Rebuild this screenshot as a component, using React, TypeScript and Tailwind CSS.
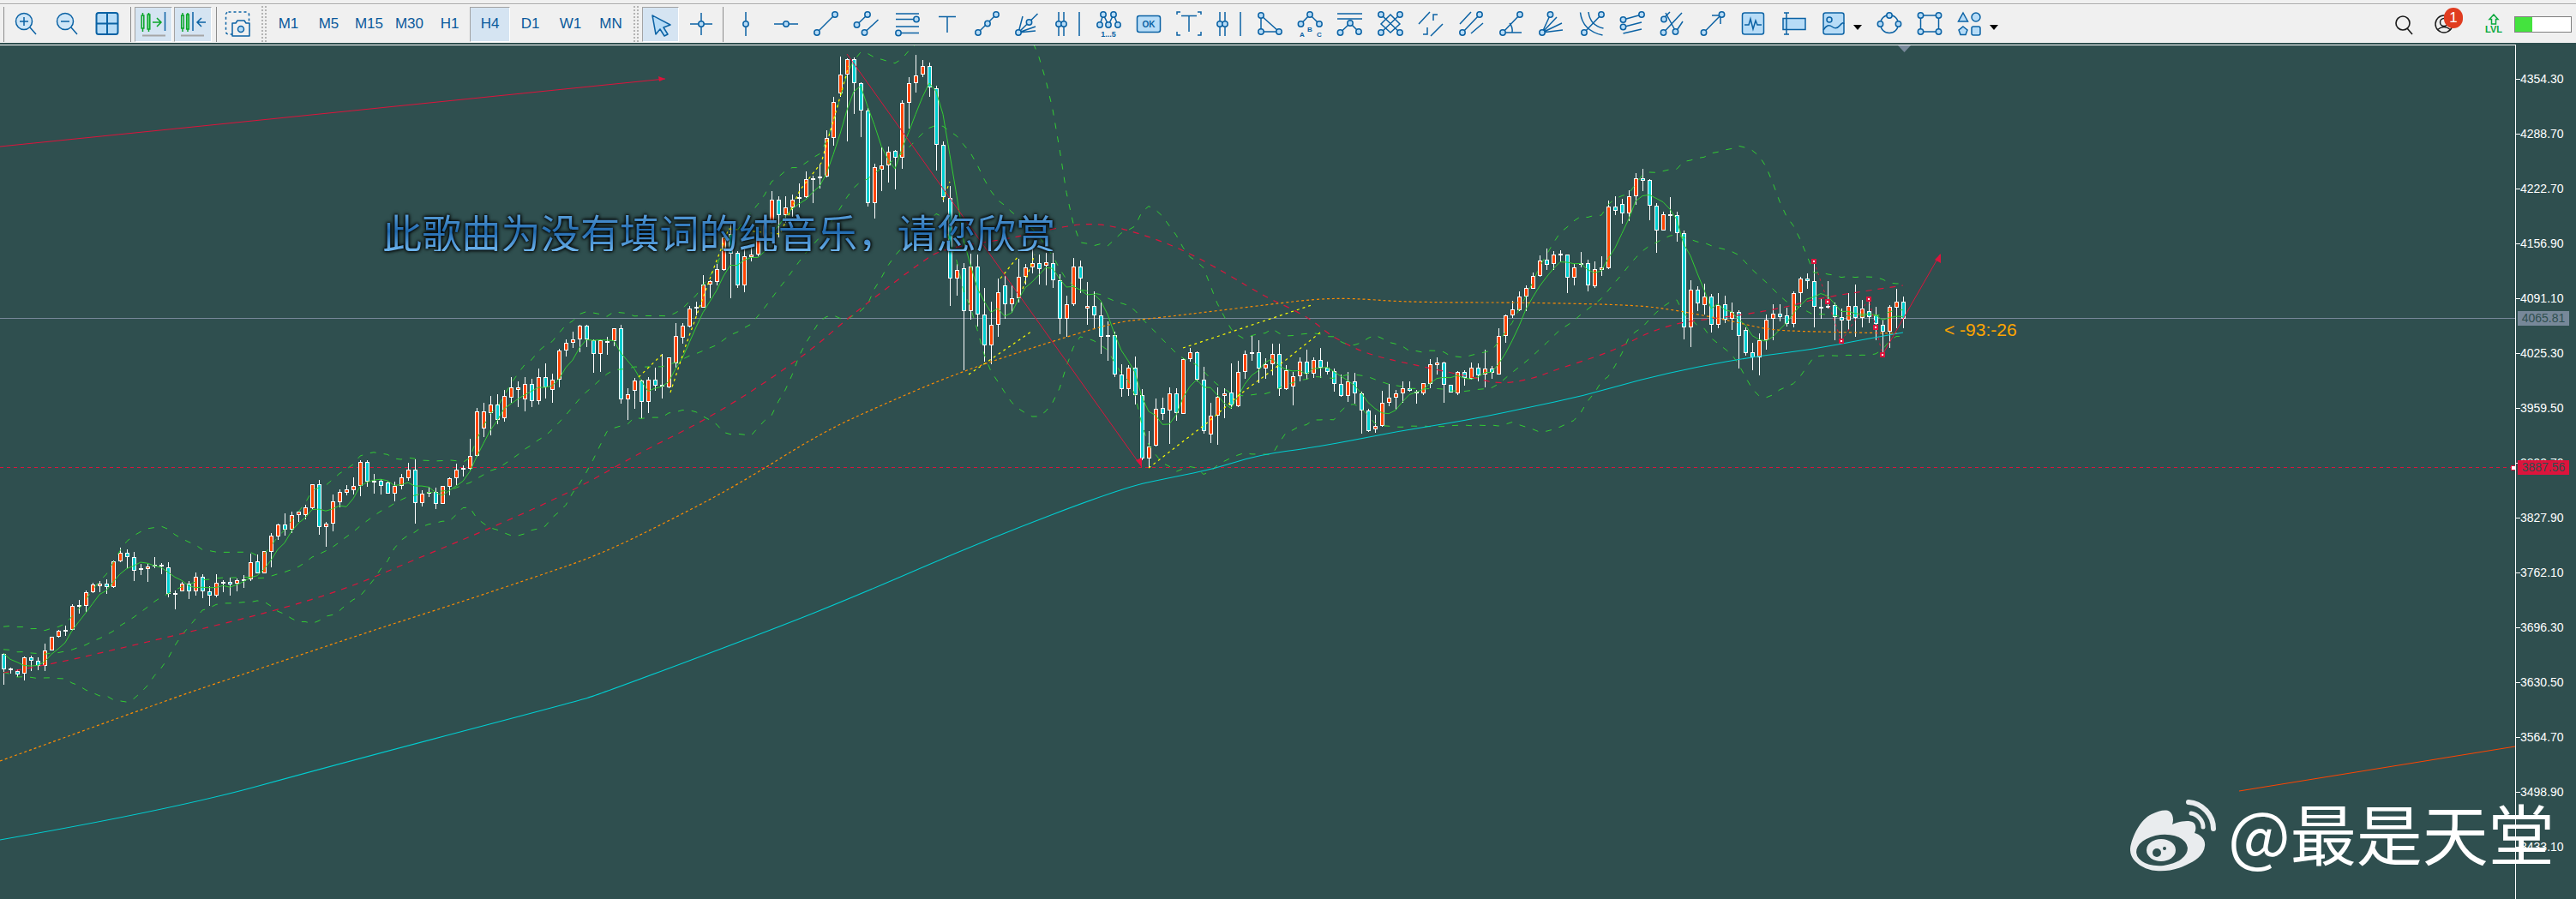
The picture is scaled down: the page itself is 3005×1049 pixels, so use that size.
import type { ReactNode } from "react";

type Row = [number, number, number, number, number];

// [teal, bodyTop, bodyBottom, wickTop, wickBottom], read off the crops
const seg1: Row[] = [
  [1,790,842,785,897],[0,840,846,838,858],[1,848,860,843,870],[0,802,858,798,882],[1,802,812,795,848],
  [1,812,832,800,845],[0,776,832,754,848],[0,728,776,728,776],[0,708,728,706,732],[0,705,710,690,725],
  [0,622,706,615,708],[0,618,623,600,648],[0,574,620,568,645],[0,547,574,540,575],[0,544,551,535,572],
  [1,544,554,528,578],[0,466,554,462,558],[0,436,466,418,468],[1,436,451,424,490],[1,451,497,433,533],
  [0,490,493,475,513],[0,484,493,475,537],[0,478,484,450,488],[1,478,484,472,510],[1,485,578,468,590],
  [0,577,581,567,632],[0,542,569,538,570],[1,542,571,534,597],[0,518,571,504,585],[1,518,571,510,594],
  [1,571,584,552,620],[0,539,584,510,590],[0,538,542,532,572],[1,538,545,522,585],[0,530,544,525,570],
  [0,528,530,513,558],[0,467,529,438,533],[1,466,506,440,508],[0,430,506,428,508],[0,376,431,365,485],
  [0,337,377,334,390],[1,337,353,297,375],[0,302,353,292,365],[0,292,302,290,328],[0,277,302,268,318],
  [0,196,278,195,282],[1,196,344,180,372],[0,334,344,328,413],[0,256,334,232,360],[0,221,257,212,275],
  [0,214,224,198,234],[0,202,216,172,232],[0,118,202,110,236],[1,118,186,111,205],[0,182,186,158,228],
  [1,184,200,178,232],[1,190,227,185,228],[0,202,227,186,255],[0,172,202,158,212],[0,145,173,120,182],
  [1,145,260,108,333],[0,227,260,216,272],[0,221,224,205,240],[1,222,263,208,282],[0,202,263,200,263],
  [0,175,203,172,234],[0,145,175,123,198],[0,137,145,128,168],[0,97,140,37,145],[0,-60,97,-72,100],
];
// these eleven sit in a gap between the crops, rough values in px from 0
const seg2: Row[] = [
  [0,480,500,470,510],[0,472,482,462,508],[1,472,490,460,495],[0,462,488,455,492],[0,452,464,440,470],
  [0,452,455,445,475],[0,448,466,440,480],[1,448,468,442,475],[0,440,468,430,472],[1,440,452,424,465],
  [0,443,455,436,470],
];
const seg3: Row[] = [
  [0,778,880,770,905],[0,750,778,738,797],[0,739,751,712,768],[0,691,739,686,782],[1,691,737,687,765],
  [1,740,790,738,855],[0,742,790,737,852],[0,743,746,728,792],[0,700,745,700,762],[1,700,949,687,962],
  [0,929,947,910,1020],[0,883,917,874,980],[1,883,956,878,1013],[0,880,956,870,995],[1,880,899,837,918],
  [0,898,904,790,945],[0,802,905,800,910],[0,727,823,682,838],[0,691,731,682,753],[0,631,692,622,695],
  [0,625,631,606,655],[0,547,626,513,628],[0,535,547,530,595],[0,493,536,475,548],[0,380,495,375,498],
  [1,368,437,330,593],[1,436,548,428,558],[0,448,548,412,572],[0,442,450,407,465],[0,382,441,362,448],
  [0,330,382,310,385],[0,250,330,220,332],[1,250,302,238,380],[0,275,302,238,330],[0,250,276,232,310],
  [0,241,245,192,276],[0,176,241,150,243],[0,174,177,165,262],
];
const seg4: Row[] = [
  [0,498,505,455,540],[0,362,498,335,500],[0,236,362,220,390],[0,142,208,78,218],[0,88,142,85,375],
  [1,88,172,82,278],[1,172,268,168,360],[1,268,590,258,602],[0,466,590,452,645],[0,458,474,396,548],
  [0,410,458,394,520],[1,408,433,405,542],[0,241,433,232,470],[0,172,241,150,330],[0,145,172,72,203],
  [0,110,140,90,150],[1,110,186,100,218],[1,190,388,180,477],[1,388,570,375,587],[1,572,856,530,950],
  [0,824,856,805,915],[1,820,968,800,1175],[0,812,968,768,1000],[1,812,982,770,1022],[1,982,1088,888,1145],
  [0,1016,1088,935,1155],[0,902,1016,855,1058],[1,880,946,845,995],[0,925,946,880,975],[0,848,925,785,940],
  [0,815,848,805,875],[0,800,816,748,836],[1,800,822,770,876],[0,799,810,765,880],[1,800,862,765,888],
  [1,862,996,840,1050],[0,946,996,915,1060],[0,812,946,782,950],[1,812,855,793,905],[0,950,960,868,1018],
  [1,950,985,900,1030],[1,985,1060,938,1120],[0,1054,1060,1005,1142],[1,1052,1190,1040,1200],
];
const seg5: Row[] = [
  [1,290,342,255,368],[0,268,343,258,365],[1,268,364,228,395],[1,362,586,342,590],[0,542,586,490,615],
  [0,410,541,375,542],[1,409,428,372,450],[0,358,418,335,533],[1,358,427,340,452],[0,238,428,235,430],
  [0,214,238,197,245],[1,214,308,210,316],[1,308,490,265,497],[0,434,502,390,530],[0,368,434,335,537],
  [0,356,367,340,445],[1,355,400,252,410],[0,283,402,243,405],[0,218,283,208,305],[0,214,219,152,243],
  [1,214,271,170,320],[0,256,271,235,305],[0,220,256,182,295],[1,220,343,184,367],[0,277,343,258,345],
  [0,298,334,283,398],[0,247,298,230,315],[1,247,288,205,310],[0,241,288,230,302],[1,241,268,198,302],
  [1,266,283,245,290],[1,280,325,270,350],[1,325,367,290,368],[0,314,367,283,388],[1,314,358,285,392],
  [1,358,418,350,497],[1,418,488,410,492],[0,472,482,432,495],[0,391,472,348,475],[0,371,391,325,402],
  [0,358,371,345,415],[0,340,358,315,390],[1,340,347,315,352],[0,350,355,345,392],[0,322,356,320,362],
  [0,256,323,237,338],[0,250,257,230,290],[1,250,328,245,390],[1,328,355,328,355],[0,283,358,280,362],
  [1,283,302,277,330],[0,268,306,248,310],[1,268,293,252,315],[0,271,292,204,335],[1,271,284,262,305],
  [0,157,290,128,292],[0,85,157,80,180],[0,64,85,33,92],[0,18,65,0,68],
];
const seg6: Row[] = [
  [0,468,498,460,550],[0,427,470,415,470],[0,371,427,355,430],[1,370,386,330,405],[0,352,385,340,405],
  [0,348,353,337,378],[1,350,433,350,487],[0,397,433,385,458],[0,382,387,342,397],[1,382,460,370,480],
  [0,403,461,375,467],[0,397,404,357,425],[0,184,398,162,403],[1,184,197,148,212],[1,175,206,155,242],
  [0,148,206,126,235],[0,85,148,66,177],[1,85,92,52,128],[1,91,179,88,232],[1,179,268,172,345],
  [0,211,266,200,266],[0,211,215,150,270],[1,214,275,202,305],[1,275,605,268,648],[0,475,605,441,675],
  [1,475,521,463,550],[0,499,527,453,562],[1,499,598,490,624],[0,527,598,487,608],[1,526,578,495,590],
  [0,553,577,520,615],[1,553,635,545,750],[1,616,695,605,706],[1,694,712,660,755],[0,650,712,628,773],
  [0,578,650,562,683],[0,559,577,525,650],[1,559,569,525,585],[1,565,595,538,602],[0,487,595,480,605],
  [0,436,487,428,535],[1,436,445,418,472],[1,445,535,375,605],[0,535,539,505,575],[0,530,533,445,540],
  [1,529,571,518,650],[1,571,581,540,655],[0,532,581,485,615],[1,532,574,455,640],[0,541,574,510,605],
  [1,550,569,505,590],[1,565,595,535,650],[1,596,620,580,700],[0,535,620,528,678],[0,517,536,470,610],
  [1,517,575,498,608],
];

const toPx = (rows: Row[], origin: number, div: number): Row[] =>
  rows.map(([t, a, b, c, d]) => [t, origin + a / div, origin + b / div, origin + c / div, origin + d / div]);

const candles: Row[] = [
  ...toPx(seg1, 500, 3),
  ...toPx(seg2, 0, 1),
  ...toPx(seg3, 150, 3),
  ...toPx(seg4, 40, 3),
  ...toPx(seg5, 340, 3),
  ...toPx(seg6, 180, 3),
];

const cx = (i: number) => 4 + 8 * i;
const closes = candles.map((c) => (c[0] ? c[2] : c[1]));
const history = [742, 768, 740, 770, 744, 766, 742, 770, 745, 768, 742, 766, 744, 770, 742, 768, 745, 770, 748, 768];
const all = [...history, ...closes];

const stats = (i: number, period: number) => {
  const w = all.slice(i + history.length - period + 1, i + history.length + 1);
  const mean = w.reduce((s, v) => s + v, 0) / w.length;
  const sd = Math.sqrt(w.reduce((s, v) => s + (v - mean) * (v - mean), 0) / w.length);
  return { mean, sd };
};

const toPoints = (p: number[][]) => p.map(([x, y]) => `${x},${y}`).join(" ");
const smooth = (p: number[][]) => {
  let d = `M${p[0][0]} ${p[0][1]}`;
  for (let i = 1; i < p.length - 1; i++) {
    const mx = (p[i][0] + p[i + 1][0]) / 2;
    const my = (p[i][1] + p[i + 1][1]) / 2;
    d += `Q${p[i][0]} ${p[i][1]} ${mx} ${my}`;
  }
  const last = p[p.length - 1];
  return `${d}L${last[0]} ${last[1]}`;
};
const fast = toPoints(closes.map((_, i) => [cx(i), stats(i, 5).mean]));
const bandMid = toPoints(closes.map((_, i) => [cx(i), stats(i, 20).mean]));
const bandUp = toPoints(closes.map((_, i) => [cx(i), stats(i, 20).mean - 2 * stats(i, 20).sd]));
const bandLow = toPoints(closes.map((_, i) => [cx(i), stats(i, 20).mean + 2 * stats(i, 20).sd]));

const tealLine = [[0,980],[200,945],[400,890],[670,819],[700,810],[900,735],[1000,695],[1150,630],[1310,569],[1367,557],[1417,547],[1467,531],[1533,522],[1587,512],[1633,503],[1683,495],[1733,486],[1780,476],[1847,462],[1913,443],[1980,428],[2047,416],[2113,408],[2180,395],[2220,388]];
const orangeLine = [[0,888],[192,818],[268,792],[357,762],[446,732],[536,703],[625,673],[700,647],[780,608],[862,565],[958,505],[1030,472],[1110,438],[1200,407],[1300,376],[1340,372],[1400,365],[1483,355],[1533,349],[1577,348],[1633,352],[1700,353],[1780,353],[1913,356],[1960,363],[2013,373],[2063,385],[2113,387],[2213,389]];
const crimsonLine = [[4,785],[60,775],[134,758],[210,740],[312,715],[402,688],[491,650],[580,613],[670,572],[747,528],[817,493],[883,453],[947,408],[987,373],[1027,342],[1073,307],[1100,290],[1180,278],[1227,267],[1277,259],[1333,273],[1393,297],[1477,347],[1500,357],[1530,373],[1550,390],[1577,405],[1600,414],[1623,420],[1647,425],[1693,435],[1717,440],[1743,447],[1767,446],[1793,440],[1813,432],[1863,416],[1890,405],[1923,388],[1957,377],[1987,373],[2013,370],[2060,363],[2097,355],[2113,350],[2147,344],[2180,339],[2220,333]];
const yellowLines = [
  [[782,458],[800,403],[813,367],[830,320],[850,267],[910,273],[933,222],[958,190],[980,113],[990,77]],
  [[745,440],[772,414]],
  [[1100,233],[1108,212]],
  [[1130,437],[1203,387]],
  [[1167,325],[1187,300]],
  [[1193,337],[1207,297]],
  [[1340,546],[1410,492],[1443,463],[1460,450],[1500,420],[1540,388]],
  [[1380,406],[1530,356]],
];
const markers = [[2116,305],[2132,352],[2148,398],[2180,349],[2188,382],[2196,414]];
const priceLabels = ["4354.30","4288.70","4222.70","4156.90","4091.10","4025.30","3959.50","3893.70","3827.90","3762.10","3696.30","3630.50","3564.70","3498.90","3433.10"];
const timeframes = ["M1","M5","M15","M30","H1","H4","D1","W1","MN"];

const BLUE = "#0b62a4";
const LIGHT = "#b7dcf7";

function Dot({ x, y }: { x: number; y: number }) {
  return <circle cx={x} cy={y} r={3.2} fill={LIGHT} stroke={BLUE} strokeWidth={1.5} />;
}

function Icon({ children }: { children: ReactNode }) {
  return (
    <svg width="32" height="32" viewBox="0 0 32 32" fill="none" stroke={BLUE} strokeWidth="1.5">
      {children}
    </svg>
  );
}

function Label({ x, y, size, children }: { x: number; y: number; size: number; children: string }) {
  return (
    <text x={x} y={y} fontSize={size} fontWeight="700" fill={BLUE} stroke="none" textAnchor="middle" fontFamily="Liberation Sans, sans-serif">
      {children}
    </text>
  );
}

const bars = (
  <>
    <path d="M5 2V30M11 2V30M29 2V30" />
    <Dot x={5} y={16} />
    <Dot x={11} y={16} />
  </>
);

const drawIcons: ReactNode[] = [
  <><path d="M16 2V30" /><Dot x={16} y={16} /></>,
  <><path d="M2 16H30" /><Dot x={16} y={16} /></>,
  <><path d="M5 26L26 5" /><Dot x={5} y={26} /><Dot x={26} y={5} /></>,
  <><path d="M4.5 17L17 5M13.5 26L29.5 11" /><Dot x={4.5} y={17} /><Dot x={17} y={5} /><Dot x={13.5} y={26} /></>,
  <><path d="M3 4H30M3 10.5H24M3 19H30M9 26.5H30" /><Dot x={27} y={10.5} /><Dot x={6} y={26.5} /></>,
  <path d="M6 7.5H26M16 7.5V26" />,
  <><path d="M5 26L26 5" /><Dot x={5} y={26} /><Dot x={16} y={15.5} /><Dot x={26} y={5} /></>,
  <><path d="M5 26L10 7M5 26L27.5 4M5 26L25 19M5 26L25 24" /><Dot x={5} y={26} /><Dot x={17.5} y={14} /></>,
  bars,
  <>
    <path d="M6 17L10 5L16 17L22 5L27 17" />
    <Dot x={10} y={5} /><Dot x={22} y={5} /><Dot x={6} y={17} /><Dot x={16} y={17} /><Dot x={27} y={17} />
    <Label x={16} y={31} size={9}>1...5</Label>
  </>,
  <>
    <rect x="2.5" y="6.5" width="27" height="19" rx="2.5" fill={LIGHT} />
    <Label x={16} y={20} size={10}>OK</Label>
  </>,
  <path d="M7 6.5H25M16 6.5V25M6 2H2V5M26 2H30V5M2 25V29H6M30 25V29H26" />,
  bars,
  <><path d="M6 6L6 25H27L6 6" /><Dot x={6} y={6} /><Dot x={6} y={25} /><Dot x={27} y={25} /></>,
  <>
    <path d="M5.5 16L16 5L27 16" />
    <Dot x={16} y={5} /><Dot x={5.5} y={16} /><Dot x={27} y={16} />
    <Label x={7} y={31} size={8}>A</Label><Label x={16} y={25} size={8}>B</Label><Label x={27} y={31} size={8}>C</Label>
  </>,
  <>
    <path d="M1 4H30M1 10H30M16 15L4.5 26M16 15L26 25" />
    <Dot x={16} y={15} /><Dot x={4.5} y={26} /><Dot x={26} y={25} />
  </>,
  <>
    <path d="M5 5L27 26M27 5L5 26M16 5L27 16L16 26L5 16Z" />
    <Dot x={5} y={5} /><Dot x={27} y={5} /><Dot x={5} y={26} /><Dot x={27} y={26} />
  </>,
  <path d="M2 16L15 2M30 16L16 30M19 12V5H24M12 20V28H7" />,
  <><path d="M3 16L16 2M6 26L26 5M16 27L30 15" /><Dot x={26} y={5} /><Dot x={6} y={26} /></>,
  <><path d="M6 26L26 5M6 26H28M14 15Q18 20 17 26" /><Dot x={6} y={26} /><Dot x={26} y={5} /></>,
  <><path d="M5 26L14.5 5M5 26L22 8M5 26L28 15M5 26L29 23" /><Dot x={14.5} y={5} /><Dot x={5} y={26} /></>,
  <><path d="M7 26L27 5M2.5 2.5Q5 24 28.5 29M12 2Q14 18 29.5 21" /><Dot x={7} y={26} /><Dot x={27} y={5} /></>,
  <>
    <path d="M5.5 11L27 5M5.5 19.5L27 14M5.5 27L27 22" />
    <Dot x={5.5} y={11} /><Dot x={27} y={5} /><Dot x={5.5} y={19.5} />
  </>,
  <>
    <path d="M5.5 26L27 3M8 3L20 25M4 11L13 2M20 25L28 13" />
    <Dot x={5.5} y={26} /><Dot x={19.5} y={25} /><Dot x={6} y={10.5} />
  </>,
  <><path d="M5.5 26L26 5M15 6H25V16" /><Dot x={5.5} y={26} /><Dot x={26.5} y={5} /></>,
  <>
    <rect x="3.5" y="3" width="25" height="25" rx="2.5" fill={LIGHT} />
    <path d="M6 17H11L13 10L16 22L19 12L21 17H26" />
  </>,
  <>
    <rect x="4" y="9.5" width="26" height="13" fill={LIGHT} />
    <path d="M8 3V28M5 3H11M5 28H11" />
  </>,
  <>
    <rect x="4" y="3" width="24" height="25" rx="2.5" fill={LIGHT} />
    <circle cx="11" cy="11" r="3" />
    <path d="M4 23Q9 15 14 19T23 18T28 16" />
  </>,
];

const shapeIcons: ReactNode[] = [
  <>
    <circle cx="16" cy="16" r="10.5" />
    <Dot x={16} y={6} /><Dot x={5.5} y={16} /><Dot x={26.5} y={16} />
  </>,
  <>
    <rect x="5.5" y="6" width="21" height="19" />
    <Dot x={5.5} y={6} /><Dot x={26.5} y={6} /><Dot x={5.5} y={25} /><Dot x={26.5} y={25} />
  </>,
  <>
    <path d="M8 3L13.5 13H2.5Z" fill={LIGHT} />
    <circle cx="23" cy="8" r="5" fill={LIGHT} />
    <path d="M8 19L13 23L11 28.5H5L3 23Z" fill={LIGHT} />
    <rect x="18" y="19" width="10" height="10" rx="2" fill={LIGHT} />
  </>,
];

function Cell({ children }: { children: ReactNode }) {
  return <div className="flex h-full w-[47px] shrink-0 items-center justify-center">{children}</div>;
}

function Sep({ className }: { className: string }) {
  return <div className={`h-[41px] w-px shrink-0 bg-[#8c8c8c] ${className}`} />;
}

function Grip({ className }: { className: string }) {
  return <div className={`h-[42px] w-[6px] shrink-0 border-x-2 border-dotted border-[#b4b4b4] ${className}`} />;
}

function DropArrow() {
  return <div className="mt-[7px] h-0 w-0 shrink-0 border-x-[5px] border-t-[6px] border-x-transparent border-t-black" />;
}

const pressed = "border border-t-[#a3a3a3] border-l-[#a3a3a3] border-r-white border-b-white bg-[#d5e4f2]";

function Toolbar() {
  return (
    <div className="flex h-[44px] items-center bg-[#f0f0f0] pl-[4px] font-['Liberation_Sans',sans-serif]">
      <Sep className="" />
      {[
        <>
          <circle cx="15" cy="13" r="9.5" fill="#cfe6f7" />
          <path d="M22 20L29 28M10 13H20M15 8V18" />
        </>,
        <>
          <circle cx="15" cy="13" r="9.5" fill="#cfe6f7" />
          <path d="M22 20L29 28M10 13H20" />
        </>,
        <>
          <rect x="3.5" y="3" width="25" height="25" rx="2.5" fill={LIGHT} strokeWidth="2" />
          <path d="M16 3V28M3.5 15.5H28.5" strokeWidth="2" />
        </>,
      ].map((icon, i) => (
        <div key={i} className="flex h-full w-[48px] shrink-0 items-center justify-center">
          <Icon>{icon}</Icon>
        </div>
      ))}
      <Sep className="ml-[3px]" />
      <div className={`ml-[4px] flex h-[41px] w-[44px] shrink-0 items-center justify-center ${pressed}`}>
        <Icon>
          <path d="M3.5 3V25M10.5 3V25" stroke="#0aa52a" />
          <rect x="2.2" y="6" width="2.6" height="15" fill="#d5e4f2" stroke="#0aa52a" />
          <rect x="9.2" y="5" width="2.6" height="17" fill="#7be08c" stroke="#0aa52a" />
          <path d="M15 14H24M20 9L25 14L20 19" stroke="#0aa52a" />
          <path d="M29.5 2V24" />
          <path d="M3 29.5H30" stroke="#a6a6a6" strokeWidth="2" />
        </Icon>
      </div>
      <div className={`ml-[2px] flex h-[41px] w-[44px] shrink-0 items-center justify-center ${pressed}`}>
        <Icon>
          <path d="M4 3V25M10 3V25" stroke="#0aa52a" />
          <rect x="2.7" y="6" width="2.6" height="15" fill="#d5e4f2" stroke="#0aa52a" />
          <rect x="8.7" y="5" width="2.6" height="17" fill="#7be08c" stroke="#0aa52a" />
          <path d="M16 2V24" />
          <path d="M31 14H22M26 9L21 14L26 19" />
          <path d="M2 29.5H29" stroke="#a6a6a6" strokeWidth="2" />
        </Icon>
      </div>
      <Sep className="ml-[5px]" />
      <div className="flex h-full w-[50px] shrink-0 items-center justify-center">
        <Icon>
          <rect x="1.5" y="2" width="27" height="26" rx="3" strokeDasharray="3 3" />
          <path d="M9 15H13L15 12H23L25 15H29V30H9Z" fill="#f0f0f0" strokeLinejoin="round" />
          <circle cx="19" cy="22" r="3.5" fill={LIGHT} />
        </Icon>
      </div>
      <Grip className="ml-[2px]" />
      <div className="ml-[2px] flex h-full shrink-0 items-center">
        {timeframes.map((t) => (
          <div
            key={t}
            className={
              t === "H4"
                ? `flex h-[41px] w-[47px] items-center justify-center text-[17px] text-[#0a5a9c] ${pressed}`
                : "flex h-[41px] w-[47px] items-center justify-center text-[17px] text-[#0a5a9c]"
            }
          >
            {t}
          </div>
        ))}
      </div>
      <Grip className="ml-[3px]" />
      <div className={`ml-[4px] flex h-[41px] w-[43px] shrink-0 items-center justify-center ${pressed}`}>
        <Icon>
          <path d="M6 6L27 17L19 20L24 28L20 30L15 22L10 28Z" fill={LIGHT} strokeLinejoin="round" />
        </Icon>
      </div>
      <div className="ml-[2px] flex h-full w-[47px] shrink-0 items-center justify-center">
        <Icon>
          <path d="M3 16H29M16 3V29" />
          <Dot x={16} y={16} />
        </Icon>
      </div>
      <Sep className="ml-[2px]" />
      <div className="ml-[2px] flex h-full shrink-0 items-center">
        {drawIcons.map((icon, i) => (
          <Cell key={i}>
            <Icon>{icon}</Icon>
          </Cell>
        ))}
      </div>
      <DropArrow />
      <div className="ml-[8px] flex h-full shrink-0 items-center">
        {shapeIcons.map((icon, i) => (
          <Cell key={i}>
            <Icon>{icon}</Icon>
          </Cell>
        ))}
      </div>
      <DropArrow />
      <div className="ml-auto flex items-center pr-[5px]">
        <svg width="24" height="24" viewBox="0 0 24 24" fill="none" stroke="#1a1a1a" strokeWidth="1.6" className="mt-[2px]">
          <circle cx="11" cy="10" r="8" />
          <path d="M16 16L22 23" />
        </svg>
        <div className="relative ml-[23px] h-[24px] w-[24px]">
          <svg width="24" height="24" viewBox="0 0 24 24" fill="none" stroke="#1a1a1a" strokeWidth="1.5">
            <circle cx="12" cy="12" r="10" />
            <circle cx="12" cy="10" r="4.5" />
            <path d="M4 19Q12 12 20 19" />
          </svg>
          <div className="absolute -top-[7px] left-[12px] flex h-[24px] w-[22px] items-center justify-center rounded-full bg-[#e03c20] text-[17px] text-white">
            1
          </div>
        </div>
        <div className="ml-[36px] flex w-[20px] flex-col items-center">
          <svg width="14" height="13" viewBox="0 0 14 13" fill="none" stroke="#08a83c" strokeWidth="1.5">
            <path d="M7 1L12 6.5H9.5V12H4.5V6.5H2Z" />
          </svg>
          <span className="text-[11px] leading-[11px] font-bold text-[#08a83c]">LVL</span>
        </div>
        <div className="ml-[14px] flex h-[19px] w-[67px] border border-[#808080] bg-white">
          <div className="h-full w-[20px] bg-[#44e33e]" />
        </div>
      </div>
    </div>
  );
}

function Chart() {
  return (
    <svg className="block h-[996px] w-[2934px]" viewBox="0 53 2934 996" fill="none">
      <path d="M0 371.5H2934" stroke="#778899" shapeRendering="crispEdges" />
      <path d="M0 545.5H2934" stroke="#dc143c" strokeDasharray="4 4" shapeRendering="crispEdges" />
      <g shapeRendering="crispEdges">
        {candles.map(([teal, top, bot, hi, lo], i) => {
          const x = cx(i);
          const y = Math.round(top);
          const h = Math.max(2, Math.round(bot) - y);
          return (
            <g key={i}>
              <rect x={x} y={Math.round(hi)} width="1" height={Math.max(1, Math.round(lo) - Math.round(hi))} fill="#fff" />
              <rect x={x - 2} y={y} width="5" height={h} fill="#fff" />
              {h > 2 && <rect x={x - 1} y={y + 1} width="3" height={h - 2} fill={teal ? "#00ced1" : "#ff4500"} />}
            </g>
          );
        })}
      </g>
      <g strokeLinejoin="round">
        <polyline points={bandUp} stroke="#32cd32" strokeDasharray="7 9" />
        <polyline points={bandMid} stroke="#32cd32" strokeDasharray="7 9" />
        <polyline points={bandLow} stroke="#32cd32" strokeDasharray="7 9" />
        <polyline points={fast} stroke="#32cd32" />
        {yellowLines.map((l, i) => (
          <polyline key={i} points={toPoints(l)} stroke="#ffff00" strokeDasharray="3 4" strokeWidth="1.2" />
        ))}
        <path d={smooth(crimsonLine)} stroke="#dc143c" strokeDasharray="7 7" strokeWidth="1.2" />
        <path d={smooth(orangeLine)} stroke="#ff8c00" strokeDasharray="3 3" strokeWidth="1.2" />
        <path d={smooth(tealLine)} stroke="#00ced1" strokeWidth="1.1" />
        <path d="M0 171L776 92M988 63L1332 545M2196 414L2263 297" stroke="#dc143c" />
        <path d="M776 92L768 89L769 95ZM1332 545L1325 537L1332 534ZM2264 296L2257 303L2264 307Z" fill="#dc143c" />
        <path d="M2116 305L2148 398L2180 349L2196 414" stroke="#dc143c" strokeDasharray="3 4" />
        <path d="M2612 923L2934 871" stroke="#ff4500" />
        {markers.map(([x, y]) => (
          <rect key={x} x={x - 2} y={y - 2} width="4" height="4" fill="#fff" stroke="#dc143c" strokeWidth="1.4" shapeRendering="crispEdges" />
        ))}
        <rect x="2929" y="543" width="5" height="5" fill="#fff" stroke="#dc143c" shapeRendering="crispEdges" />
        <path d="M2214 53H2229L2221.5 61Z" fill="#778899" />
      </g>
    </svg>
  );
}

function PriceAxis() {
  return (
    <div className="relative w-[70px] shrink-0 pt-[8px] text-[14px] text-white">
      {priceLabels.map((p) => (
        <div key={p} className="flex h-[64px] items-center">
          <div className="h-px w-[5px] bg-white" />
          <span>{p}</span>
        </div>
      ))}
      <div className="absolute top-[311px] left-[2px] flex h-[17px] w-[60px] items-center justify-center bg-[#778899] text-[#2f4f4f]">
        4065.81
      </div>
      <div className="absolute top-[485px] left-[2px] flex h-[17px] w-[60px] items-center justify-center bg-[#dc143c] text-[#2f4f4f]">
        3887.56
      </div>
    </div>
  );
}

function WeiboLogo() {
  return (
    <svg width="101" height="85" viewBox="0 0 101 85" fill="none" className="shrink-0">
      <path
        d="M0 58C2 44 12 24 25 18C33 14 42 12 46 15C50 18 51 25 49 30C56 27 68 24 74 28C77 31 77 36 75 40C82 42 88 47 87 55C86 66 75 73 66 77C54 83 42 85 30 84C18 83 -1 74 0 58Z"
        fill="#e9ecee"
      />
      <ellipse cx="37" cy="60" rx="30" ry="18" transform="rotate(-6 37 60)" fill="#2f4f4f" />
      <ellipse cx="36" cy="60" rx="17" ry="13" fill="#e9ecee" />
      <circle cx="31" cy="63" r="5" fill="#2f4f4f" />
      <circle cx="40" cy="58" r="2" fill="#2f4f4f" />
      <path d="M68 4C84 5 97 19 97 35" stroke="#e9ecee" strokeWidth="6" strokeLinecap="round" />
      <path d="M71 17C78 18 85 25 85 33" stroke="#e9ecee" strokeWidth="5" strokeLinecap="round" />
    </svg>
  );
}

export default function App() {
  return (
    <div className="relative flex h-[1049px] w-[3005px] flex-col overflow-hidden bg-[#2f4f4f] font-['Liberation_Sans',sans-serif]">
      <div className="h-[4px] bg-[#f0f0f0]" />
      <div className="h-px bg-[#a0a0a0]" />
      <div className="h-px bg-white" />
      <Toolbar />
      <div className="h-[2px]" />
      <div className="flex min-h-0 flex-1">
        <div className="relative w-[2935px] shrink-0 overflow-hidden border-t border-r border-white">
          <Chart />
          <div className="absolute top-[194px] left-[446px] bg-linear-to-b from-[#62a8e0] via-[#1f69ae] to-[#6fb6ee] bg-clip-text font-['Noto_Sans_CJK_SC',sans-serif] text-[46.2px] leading-[46px] whitespace-nowrap text-transparent [filter:drop-shadow(0_0_2px_#000)_drop-shadow(0_0_1px_#000)]">
            此歌曲为没有填词的纯音乐，请您欣赏
          </div>
          <div className="absolute top-[320px] left-[2268px] text-[21px] leading-[24px] whitespace-nowrap text-[#ffa500]">
            {"< -93:-26"}
          </div>
        </div>
        <PriceAxis />
      </div>
      <div className="absolute top-[932px] left-[2485px] flex items-start gap-[13px]">
        <WeiboLogo />
        <div className="-mt-[11px] font-['Noto_Sans_CJK_SC',sans-serif] text-[77px] leading-[100px] whitespace-nowrap text-white">
          @最是天堂
        </div>
      </div>
    </div>
  );
}
